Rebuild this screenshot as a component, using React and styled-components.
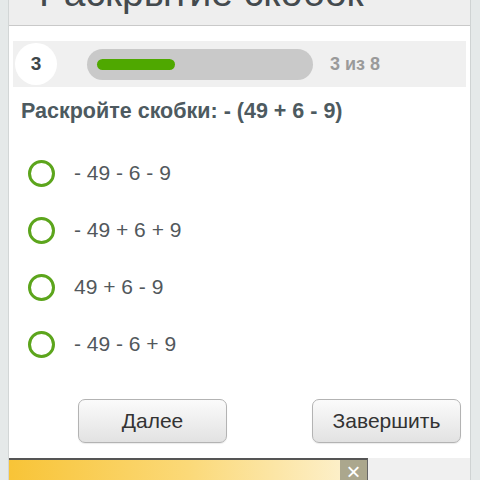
import React from "react";
import styled, { createGlobalStyle } from "styled-components";

const Global = createGlobalStyle`
  html, body { margin: 0; padding: 0; background: #e5e9e9; }
  body { font-family: "Liberation Sans", Arial, sans-serif; width: 480px; height: 480px; overflow: hidden; }
`;

const Page = styled.div`
  width: 480px;
  height: 480px;
  display: flex;
  padding: 0 9px 0 8px;
  box-sizing: border-box;
`;

const Card = styled.div`
  flex: 1;
  background: #fff;
  border-left: 1px solid #d2d6d6;
  border-right: 1px solid #cfd3d3;
  display: flex;
  flex-direction: column;
  overflow: hidden;
  & > * { flex-shrink: 0; }
`;

const Header = styled.div`
  height: 25px;
  background: #eeeeee;
  border-bottom: 1px solid #c9c9c9;
  overflow: hidden;
  padding-left: 30px;
`;

const Title = styled.h1`
  margin: -25px 0 0;
  font-size: 39px;
  line-height: 36px;
  font-weight: normal;
  color: #444a4e;
  white-space: nowrap;
`;

const Band = styled.div`
  margin: 15px 4px 0;
  height: 46px;
  background: #f0f0f0;
  display: flex;
  align-items: center;
  padding-left: 2px;
`;

const Num = styled.div`
  width: 42px;
  height: 42px;
  border-radius: 50%;
  background: #fff;
  display: flex;
  align-items: center;
  justify-content: center;
  font-weight: bold;
  font-size: 19px;
  color: #3e4649;
`;

const Track = styled.div`
  margin-left: 30px;
  width: 226px;
  height: 31px;
  border-radius: 16px;
  background: #c9c9c9;
  display: flex;
  align-items: center;
  padding-left: 10px;
  box-sizing: border-box;
`;

const Fill = styled.div`
  height: 11px;
  border-radius: 6px;
  background: #4fa800;
`;

const Count = styled.div`
  margin-left: 17px;
  font-weight: bold;
  font-size: 18px;
  color: #9a9a9a;
`;

const Question = styled.div`
  margin: 11px 0 0 12px;
  font-weight: bold;
  font-size: 21.5px;
  color: #4d5a60;
  line-height: 26px;
`;

const Options = styled.div`
  margin-top: 36px;
  display: flex;
  flex-direction: column;
  gap: 31px;
  padding-left: 19px;
`;

const Option = styled.label`
  display: flex;
  align-items: center;
  height: 26px;
  font-size: 21px;
  color: #52585c;
`;

const Radio = styled.span`
  width: 21px;
  height: 21px;
  border: 3px solid #5ca51c;
  border-radius: 50%;
  margin-right: 19px;
`;

const Buttons = styled.div`
  margin-top: 42px;
  display: flex;
  padding: 0 9px 0 69px;
  justify-content: space-between;
`;

const Button = styled.button`
  width: 149px;
  height: 44px;
  border: 1px solid #b3b3b3;
  border-radius: 7px;
  background: linear-gradient(#fbfbfb, #e2e2e2);
  font-family: "Liberation Sans", Arial, sans-serif;
  font-size: 21px;
  color: #333;
  box-shadow: 0 1px 1px rgba(0,0,0,0.08);
`;

const Footer = styled.div`
  margin-top: 15px;
  display: flex;
  height: 30px;
  background: #f0f0f0;
`;

const Ad = styled.div`
  width: 358px;
  border-top: 2px solid #555;
  border-right: 1px solid #666;
  background: linear-gradient(90deg, #f8c437 0%, #fbd978 50%, #fdf3d6 100%);
  display: flex;
  justify-content: flex-end;
`;

const Close = styled.div`
  width: 27px;
  background: #aba78d;
  color: #fff;
  font-size: 24px;
  line-height: 24px;
  text-align: center;
`;

const options = ["- 49 - 6 - 9", "- 49 + 6 + 9", "49 + 6 - 9", "- 49 - 6 + 9"];

export default function App() {
  return (
    <>
      <Global />
      <Page>
        <Card>
          <Header>
            <Title>Раскрытие скобок</Title>
          </Header>
          <Band>
            <Num>3</Num>
            <Track>
              <Fill style={{ width: `${(3 / 8) * 208}px` }} />
            </Track>
            <Count>3 из 8</Count>
          </Band>
          <Question>Раскройте скобки: - (49 + 6 - 9)</Question>
          <Options>
            {options.map((o) => (
              <Option key={o}>
                <Radio />
                {o}
              </Option>
            ))}
          </Options>
          <Buttons>
            <Button>Далее</Button>
            <Button>Завершить</Button>
          </Buttons>
          <Footer>
            <Ad>
              <Close>×</Close>
            </Ad>
          </Footer>
        </Card>
      </Page>
    </>
  );
}
